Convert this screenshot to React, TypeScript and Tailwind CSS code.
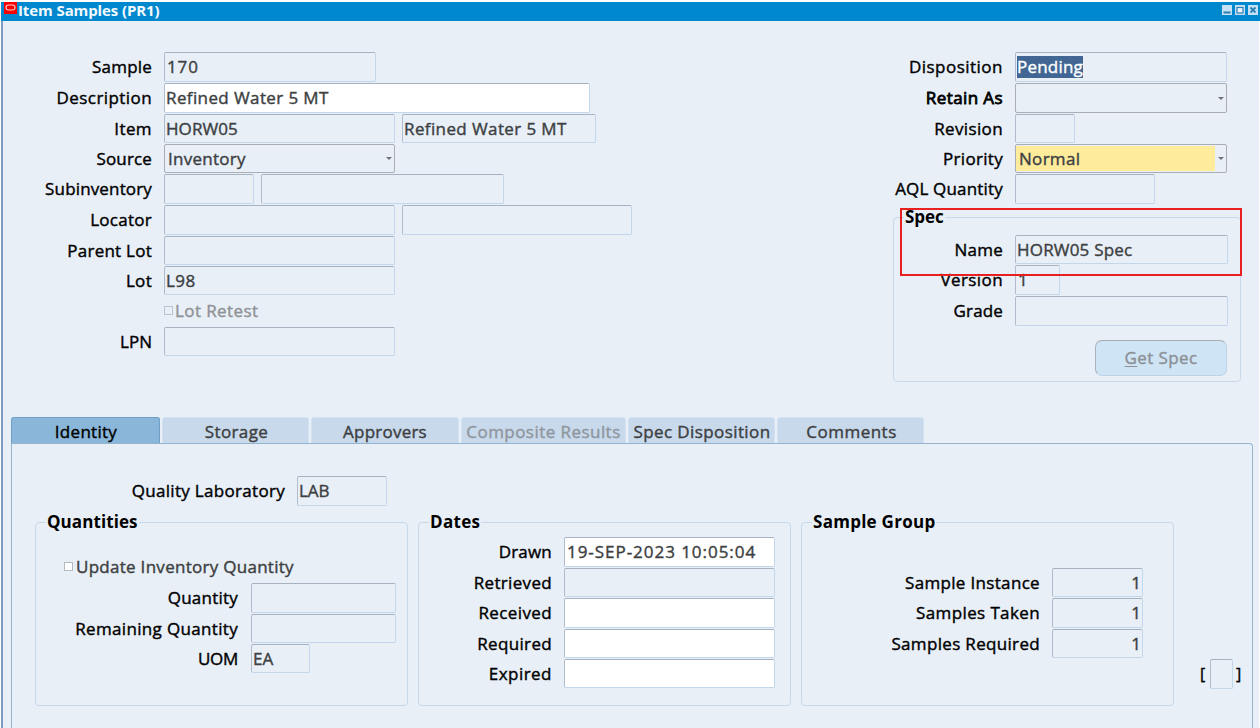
import type { ReactNode } from 'react';

const edge =
  'border border-t-[#a7b2c0] border-l-[#b0bccb] border-r-[#c3d7ec] border-b-[#c3d7ec] rounded-[2px]';

type FieldProps = { w: string; value?: string; track?: string; white?: boolean; className?: string };

function Field({ w, value, track = '', white, className = '' }: FieldProps) {
  return (
    <div
      className={`${w} ${edge} ${white ? 'bg-white' : 'bg-[#e8eff7]'} flex h-[calc(100%-1px)] shrink-0 items-center px-px text-[#3d3f42] ${className}`}
    >
      {value && <span className={track}>{value}</span>}
    </div>
  );
}

function Select({ w, value, track = '', yellow }: { w: string; value?: string; track?: string; yellow?: boolean }) {
  return (
    <div className={`${w} flex h-[calc(100%-1px)] shrink-0 rounded-[2px] border border-[#a9aeb5] bg-[#e8eff7] text-[#3d3f42]`}>
      <div className={`flex flex-1 items-center pl-[3px] ${yellow ? 'my-px bg-[#ffeb9c]' : ''}`}>
        <span className={track}>{value}</span>
      </div>
      <div className="flex w-[11px] items-center justify-center">
        <svg width="6" height="3" viewBox="0 0 6 3">
          <path d="M0 0h6L3 3z" fill="#6f747a" />
        </svg>
      </div>
    </div>
  );
}

type RowProps = { label?: string; track?: string; h?: string; lw: string; gap?: string; bold?: boolean; children?: ReactNode };

function Row({ label, track = 'tracking-[0.33px]', h = 'h-[31px]', lw, gap = 'gap-x-[12px]', bold, children }: RowProps) {
  return (
    <div className={`flex ${h} ${gap}`}>
      <div className={`${lw} flex h-[calc(100%-1px)] shrink-0 items-center justify-end whitespace-nowrap`}>
        <span className={`${track} ${bold ? '[-webkit-text-stroke:0.8px]' : ''}`}>{label}</span>
      </div>
      <div className="flex h-full gap-[7px]">{children}</div>
    </div>
  );
}

function Group({ title, track, className, children }: { title: string; track: string; className: string; children: ReactNode }) {
  return (
    <fieldset className={`rounded-[4px] border border-[#c6d9ec] ${className}`}>
      <legend className={`ml-[10px] h-[22px] px-px leading-[22px] font-bold [-webkit-text-stroke:0px] ${track}`}>{title}</legend>
      {children}
    </fieldset>
  );
}

const tabs = [
  { label: 'Identity', cls: 'w-[149px] mr-[2px] pl-px bg-[#8ab6d9] border-[#6f9fc6] text-black tracking-[0.28px]' },
  { label: 'Storage', cls: 'w-[147px] mr-[2px] pl-[2px] bg-[#c8d9eb] border-[#d3e2f2] text-[#3d3f42] tracking-[0.38px]' },
  { label: 'Approvers', cls: 'w-[148px] mr-[2px] bg-[#c8d9eb] border-[#d3e2f2] text-[#3d3f42] tracking-[0.22px]' },
  { label: 'Composite Results', cls: 'w-[165px] mr-[2px] bg-[#c8d9eb] border-[#d3e2f2] text-[#8f969e] tracking-[0.45px]' },
  { label: 'Spec Disposition', cls: 'w-[147px] mr-[2px] pl-px bg-[#c8d9eb] border-[#d3e2f2] text-[#3d3f42] tracking-[0.4px]' },
  { label: 'Comments', cls: 'w-[147px] pl-[2px] bg-[#c8d9eb] border-[#d3e2f2] text-[#3d3f42] tracking-[0.5px]' },
];

function TitleBar() {
  return (
    <div className="mt-[2px] ml-px flex h-[19px] items-start justify-between bg-[#0088ce] pl-[3px]">
      <div className="flex">
        <svg width="13" height="12" viewBox="0 0 13 12">
          <rect width="13" height="12" fill="#f80000" />
          <rect x="2" y="3" width="9" height="5" rx="2.5" fill="none" stroke="#ffd0d0" strokeWidth="1.1" />
        </svg>
        <span className="ml-px text-[15px] leading-[17px] font-bold tracking-[-0.1px] text-[#f3faff] [-webkit-text-stroke:0px]">
          Item Samples (PR1)
        </span>
      </div>
      <svg className="mt-[3px] mr-[2px]" width="36" height="10" viewBox="0 0 36 10">
        <g fill="#c5e1f3">
          <rect width="10" height="10" />
          <rect x="13" width="10" height="10" />
          <rect x="26" width="10" height="10" />
        </g>
        <rect x="1.5" y="6.5" width="7" height="2" fill="#2b7fb5" />
        <rect x="15" y="2.5" width="6" height="5.5" fill="#e8f3fa" stroke="#2b7fb5" strokeWidth="1.2" />
        <path d="M28.5 2.5l5 5M33.5 2.5l-5 5" stroke="#2b7fb5" strokeWidth="1.8" />
      </svg>
    </div>
  );
}

export default function App() {
  const L = 'w-[149px]';
  const R = 'w-[110px]';
  const S = 'w-[109px]';
  return (
    <div className="flex h-[728px] w-[1260px] flex-col overflow-hidden bg-white font-['Open_Sans','Noto_Sans',sans-serif] text-[17px] leading-[22px] text-black [-webkit-text-stroke:0.4px]">
      <TitleBar />
      <div className="mr-px ml-px flex flex-1 flex-col border-l-2 border-[#7b9cc0] bg-[#e8eff7]">
        <div className="flex h-[396px] pt-[31px]">
          <div className="flex w-[890px] flex-col">
            <Row lw={L} label="Sample" track="tracking-[0.2px]">
              <Field w="w-[212px]" value="170" track="tracking-[0.9px]" className="pl-[2px]" />
            </Row>
            <Row lw={L} label="Description" track="tracking-[0.42px]">
              <Field w="w-[426px]" white value="Refined Water 5 MT" track="tracking-[0.39px]" />
            </Row>
            <Row lw={L} h="h-[30px]" label="Item" track="tracking-[0.4px]">
              <Field w="w-[231px]" value="HORW05" track="tracking-[0.07px]" />
              <Field w="w-[194px]" value="Refined Water 5 MT" track="tracking-[0.39px]" />
            </Row>
            <Row lw={L} h="h-[30px]" label="Source" track="tracking-[0.15px]">
              <Select w="w-[231px]" value="Inventory" track="tracking-[0.27px]" />
            </Row>
            <Row lw={L} label="Subinventory" track="tracking-[0.15px]">
              <Field w="w-[90px]" />
              <Field w="w-[243px]" />
            </Row>
            <Row lw={L} label="Locator" track="tracking-[0.27px]">
              <Field w="w-[231px]" />
              <Field w="w-[230px]" />
            </Row>
            <Row lw={L} h="h-[30px]" label="Parent Lot" track="tracking-[0.25px]">
              <Field w="w-[231px]" />
            </Row>
            <Row lw={L} h="h-[30px]" label="Lot" track="tracking-[0.3px]">
              <Field w="w-[231px]" value="L98" track="tracking-[0.5px]" />
            </Row>
            <Row lw={L} h="h-[31px]">
              <div className="flex h-[30px] items-center gap-[2px] text-[#8f9295]">
                <span className="mb-[2px] size-[9px] border border-[#bcc4cd]" />
                <span className="tracking-[0.41px]">Lot Retest</span>
              </div>
            </Row>
            <Row lw={L} h="h-[30px]" label="LPN" track="tracking-[0px]">
              <Field w="w-[231px]" />
            </Row>
          </div>
          <div className="relative flex w-[349px] flex-col">
            <Row lw={R} label="Disposition" track="tracking-[0.48px]">
              <div className={`flex h-[30px] w-[212px] items-center pl-px ${edge}`}>
                <span className="bg-[#416693] tracking-[0.2px] text-white">Pending</span>
              </div>
            </Row>
            <Row lw={R} label="Retain As" track="tracking-[0.4px]" bold>
              <Select w="w-[212px]" />
            </Row>
            <Row lw={R} h="h-[30px]" label="Revision" track="tracking-[0.36px]">
              <Field w="w-[60px]" />
            </Row>
            <Row lw={R} h="h-[30px]" label="Priority" track="tracking-[0.3px]">
              <Select w="w-[212px]" value="Normal" track="tracking-[0.3px]" yellow />
            </Row>
            <Row lw={R} label="AQL Quantity" track="tracking-[0.18px]">
              <Field w="w-[140px]" />
            </Row>
            <Group title="Spec" track="tracking-[-0.06px]" className="mt-px h-[176px] w-[348px]">
              <div className="mt-[7px]">
                <Row lw={S} h="h-[30px]" label="Name" track="tracking-[0.25px]">
                  <Field w="w-[213px]" value="HORW05 Spec" track="tracking-[0.19px]" />
                </Row>
                <Row lw={S} h="h-[31px]" label="Version" track="tracking-[0.4px]">
                  <Field w="w-[45px]" value="1" className="pl-[2px]" />
                </Row>
                <Row lw={S} label="Grade" track="tracking-[0.15px]">
                  <Field w="w-[213px]" />
                </Row>
              </div>
              <button className="mt-[13px] ml-[201px] block h-[36px] w-[132px] rounded-[7px] border border-t-[#a9adb2] border-r-[#bcd3e8] border-b-[#bcd3e8] border-l-[#a9b2bb] bg-[#cfe4f5] tracking-[0.38px] text-[#8c9196]">
                <span className="underline decoration-1 underline-offset-2">G</span>et Spec
              </button>
            </Group>
            <div className="absolute top-[156px] left-[7px] h-[68px] w-[342px] border-2 border-[#e8201f]" />
          </div>
        </div>

        <div className="ml-[8px] flex h-[26px]">
          {tabs.map((t) => (
            <div key={t.label} className={`flex items-center justify-center rounded-t-[3px] border border-b-0 pt-[3px] whitespace-nowrap ${t.cls}`}>
              {t.label}
            </div>
          ))}
        </div>
        <div className="mr-[6px] ml-[8px] flex-1 rounded-t-[4px] rounded-tl-none border border-b-0 border-[#94b3cf] pt-[32px]">
          <Row lw="w-[273px]" label="Quality Laboratory" track="tracking-[0.31px]">
            <Field w="w-[90px]" value="LAB" track="tracking-[-0.06px]" />
          </Row>
          <div className="mt-[4px] flex pl-[23px]">
            <Group title="Quantities" track="tracking-[0.08px]" className="h-[195px] w-[373px]">
              <div className="mt-[19px] ml-[28px] flex h-[30px] items-center gap-[3px] text-[#3d3f42]">
                <span className="mb-[2px] size-[9px] border border-[#b4bac1] bg-white" />
                <span className="tracking-[0.28px]">Update Inventory Quantity</span>
              </div>
              <div className="mt-px">
                <Row lw="w-[202px]" gap="gap-x-[13px]" label="Quantity" track="tracking-[0.22px]">
                  <Field w="w-[145px]" />
                </Row>
                <Row lw="w-[202px]" gap="gap-x-[13px]" h="h-[30px]" label="Remaining Quantity">
                  <Field w="w-[145px]" />
                </Row>
                <Row lw="w-[202px]" gap="gap-x-[13px]" h="h-[30px]" label="UOM" track="tracking-[-0.31px]">
                  <Field w="w-[59px]" value="EA" track="tracking-[0px]" />
                </Row>
              </div>
            </Group>
            <Group title="Dates" track="tracking-[0.31px]" className="ml-[10px] h-[195px] w-[373px]">
              <div className="mt-[4px]">
                <Row lw="w-[133px]" label="Drawn" track="tracking-[0.2px]">
                  <Field w="w-[211px]" white value="19-SEP-2023 10:05:04" track="tracking-[0.96px]" className="pl-[2px]" />
                </Row>
                <Row lw="w-[133px]" h="h-[30px]" label="Retrieved" track="tracking-[0.33px]">
                  <Field w="w-[211px]" />
                </Row>
                <Row lw="w-[133px]" label="Received" track="tracking-[0.38px]">
                  <Field w="w-[211px]" white />
                </Row>
                <Row lw="w-[133px]" h="h-[30px]" label="Required" track="tracking-[0.33px]">
                  <Field w="w-[211px]" white />
                </Row>
                <Row lw="w-[133px]" h="h-[30px]" label="Expired" track="tracking-[0.48px]">
                  <Field w="w-[211px]" white />
                </Row>
              </div>
            </Group>
            <Group title="Sample Group" track="tracking-[0.27px]" className="ml-[10px] h-[195px] w-[373px]">
              <div className="mt-[35px]">
                <Row lw="w-[238px]" h="h-[30px]" label="Sample Instance">
                  <Field w="w-[91px]" value="1" className="justify-end" />
                </Row>
                <Row lw="w-[238px]" label="Samples Taken" track="tracking-[0.38px]">
                  <Field w="w-[91px]" value="1" className="justify-end" />
                </Row>
                <Row lw="w-[238px]" h="h-[30px]" label="Samples Required">
                  <Field w="w-[91px]" value="1" className="justify-end" />
                </Row>
              </div>
            </Group>
            <div className="mt-[147px] ml-[25px] flex h-[31px] items-center text-[16px]">
              <span className="mr-[3px] ml-px w-[7px]">[</span>
              <Field w="w-[23px]" />
              <span className="ml-[3px]">]</span>
            </div>
          </div>
        </div>
      </div>
    </div>
  );
}
